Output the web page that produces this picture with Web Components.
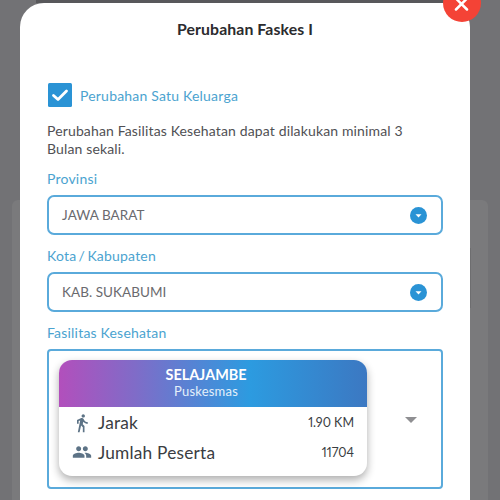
<!doctype html>
<html>
<head>
<title>Perubahan Faskes</title>
<style>
html, body { margin: 0; height: 100%; overflow: hidden; }
body { background: #727275; font-family: Lato, "Noto Sans", sans-serif; }
</style>
</head>
<body>
<page-backdrop></page-backdrop>
<faskes-modal heading="Perubahan Faskes I">
    <check-row>Perubahan Satu Keluarga</check-row>
    <p>Perubahan Fasilitas Kesehatan dapat dilakukan minimal 3<br>Bulan sekali.</p>
    <select-field label="Provinsi" value="JAWA BARAT"></select-field>
    <select-field tight label="Kota / Kabupaten" value="KAB. SUKABUMI"></select-field>
    <facility-field label="Fasilitas Kesehatan">
        <facility-card name="SELAJAMBE" type="Puskesmas" distance="1.90 KM" members="11704"></facility-card>
    </facility-field>
</faskes-modal>

<script>
class PageBackdrop extends HTMLElement {
    constructor() {
        super()
        this.attachShadow({ mode: "open" }).innerHTML = `
        <style>
        :host { position: absolute; inset: 0; display: block; overflow: hidden; }
        #top { height: 3px; margin: 0 36px; background: #58585b; }
        #panel { position: absolute; left: 12px; right: 12px; top: 200px; bottom: -20px; border-radius: 6px; background: #7a7a7c; }
        #inner { position: absolute; left: 458px; top: 48px; width: 1px; height: 60px; background: #6e6e70; }
        </style>
        <div id="top"></div>
        <div id="panel"><div id="inner"></div></div>`
    }
}

class FaskesModal extends HTMLElement {
    constructor() {
        super()
        this.attachShadow({ mode: "open" }).innerHTML = `
        <style>
        :host {
            position: absolute; left: 20px; top: 3px; width: 450px; height: 520px;
            box-sizing: border-box; padding: 0 27px;
            display: block; background: #fff; border-radius: 24px 24px 0 0;
        }
        h1 { margin: 0; padding-top: 16px; height: 64px; text-align: center;
             font-size: 15.800px; line-height: 20px; font-weight: 700; color: #2b2b2e; letter-spacing: .1px; }
        #close { position: absolute; right: -11px; top: -19px; width: 38px; height: 38px; border-radius: 50%; background: #f44336; }
        #close svg { display: block; }
        ::slotted(p) { margin: 0 0 13px; font-size: 14px; line-height: 17.500px; color: #505054; letter-spacing: .14px; }
        </style>
        <h1></h1>
        <div id="close"><svg width="38" height="38" viewBox="0 0 38 38"><path d="M13 14.500L24 25.500M24 14.500L13 25.500" stroke="#fff" stroke-width="2.500" stroke-linecap="round"/></svg></div>
        <slot></slot>`
    }
    connectedCallback() {
        this.shadowRoot.querySelector("h1").textContent = this.getAttribute("heading")
    }
}

class CheckRow extends HTMLElement {
    constructor() {
        super()
        this.attachShadow({ mode: "open" }).innerHTML = `
        <style>
        :host { display: flex; align-items: center; gap: 8px; margin: 0 0 15px 1px; font-size: 14px; color: #4ba3d0; letter-spacing: .2px; }
        svg { display: block; }
        </style>
        <svg width="24" height="24" viewBox="0 0 24 24"><rect width="24" height="24" rx="1.500" fill="#2a93d5"/><path d="M5.500 12.500L10 16.500L18.500 8" fill="none" stroke="#fff" stroke-width="2.800" stroke-linecap="round" stroke-linejoin="round"/></svg>
        <slot></slot>`
    }
}

class SelectField extends HTMLElement {
    constructor() {
        super()
        this.attachShadow({ mode: "open" }).innerHTML = `
        <style>
        :host { display: block; margin-bottom: 12px; }
        :host([tight]) #label { word-spacing: -1.500px; }
        #label { font-size: 14px; line-height: 17px; color: #4ba3d0; margin-bottom: 8px; letter-spacing: .2px; }
        #box { box-sizing: border-box; height: 40px; border: 2px solid #5aaadb; border-radius: 7px;
               display: flex; align-items: center; justify-content: space-between; padding: 0 14px 0 13px; }
        #value { font-size: 13.500px; color: #6a6a6e; letter-spacing: .05px; }
        svg { display: block; }
        </style>
        <div id="label"></div>
        <div id="box">
            <span id="value"></span>
            <svg width="17" height="17" viewBox="0 0 17 17"><circle cx="8.500" cy="8.500" r="8.500" fill="#2a93d5"/><path d="M5.500 7.200H11.500L8.500 10.500Z" fill="#fff"/></svg>
        </div>`
    }
    connectedCallback() {
        this.shadowRoot.querySelector("#label").textContent = this.getAttribute("label")
        this.shadowRoot.querySelector("#value").textContent = this.getAttribute("value")
    }
}

class FacilityField extends HTMLElement {
    constructor() {
        super()
        this.attachShadow({ mode: "open" }).innerHTML = `
        <style>
        :host { display: block; }
        #label { font-size: 14px; line-height: 17px; color: #4ba3d0; margin-bottom: 8px; letter-spacing: .2px; }
        #box { box-sizing: border-box; height: 140px; border: 2px solid #5aaadb; border-radius: 4px;
               display: flex; align-items: center; justify-content: space-between; padding: 0 24px 2px 10px; }
        #arrow { width: 0; height: 0; margin-top: 4px; border: 6.500px solid transparent; border-top: 6.500px solid #8f8f92; border-bottom: 0; }
        </style>
        <div id="label"></div>
        <div id="box"><slot></slot><div id="arrow"></div></div>`
    }
    connectedCallback() {
        this.shadowRoot.querySelector("#label").textContent = this.getAttribute("label")
    }
}

class FacilityCard extends HTMLElement {
    constructor() {
        super()
        this.attachShadow({ mode: "open" }).innerHTML = `
        <style>
        :host { display: block; width: 308px; height: 116px; border-radius: 13px; background: #fff; box-shadow: 0 4px 9px rgba(0,0,0,.32); overflow: hidden; }
        #head { height: 47px; box-sizing: border-box; padding: 7px 14px 0 0; text-align: center; color: #fff;
                background: linear-gradient(90deg, #b24fbc 0%, #7f6cc8 25%, #2c9be0 62%, #3c78c2 100%); }
        #name { font-size: 14.400px; line-height: 16px; font-weight: 700; }
        #type { font-size: 13px; line-height: 17px; color: #e4f0fa; letter-spacing: .2px; }
        #rows { padding: 1px 13px 0 13px; }
        .row { display: flex; align-items: center; height: 29.500px; color: #3a3d42; }
        .row svg { display: block; width: 20px; height: 20px; margin-right: 6px; fill: #5d7386; flex: none; }
        .key { flex: 1; font-size: 17.300px; letter-spacing: .2px; }
        .val { font-size: 12.500px; font-variant-numeric: proportional-nums; }
        </style>
        <div id="head"><div id="name"></div><div id="type"></div></div>
        <div id="rows">
            <div class="row">
                <svg viewBox="0 0 24 24"><path d="M13.500 5.500c1.100 0 2-.9 2-2s-.9-2-2-2-2 .9-2 2 .9 2 2 2zM9.800 8.900L7 23h2.100l1.800-8 2.100 2v6h2v-7.500l-2.100-2 .6-3C14.800 12 16.800 13 19 13v-2c-1.900 0-3.500-1-4.300-2.400l-1-1.600c-.4-.6-1-1-1.700-1-.3 0-.5.1-.8.1L6 8.300V13h2V9.600l1.800-.7"/></svg>
                <span class="key">Jarak</span><span class="val" id="distance"></span>
            </div>
            <div class="row">
                <svg viewBox="0 0 24 24"><path d="M16 11c1.660 0 2.990-1.340 2.990-3S17.660 5 16 5c-1.660 0-3 1.340-3 3s1.340 3 3 3zm-8 0c1.660 0 2.990-1.340 2.990-3S9.660 5 8 5C6.340 5 5 6.340 5 8s1.340 3 3 3zm0 2c-2.330 0-7 1.170-7 3.500V19h14v-2.500c0-2.330-4.670-3.500-7-3.500zm8 0c-.29 0-.62.020-.97.050 1.160.84 1.970 1.970 1.970 3.450V19h6v-2.500c0-2.330-4.670-3.500-7-3.500z"/></svg>
                <span class="key">Jumlah Peserta</span><span class="val" id="members"></span>
            </div>
        </div>`
    }
    connectedCallback() {
        for (const id of ["name", "type", "distance", "members"]) {
            this.shadowRoot.querySelector("#" + id).textContent = this.getAttribute(id)
        }
    }
}

customElements.define("page-backdrop", PageBackdrop)
customElements.define("faskes-modal", FaskesModal)
customElements.define("check-row", CheckRow)
customElements.define("select-field", SelectField)
customElements.define("facility-field", FacilityField)
customElements.define("facility-card", FacilityCard)
</script>
</body>
</html>
